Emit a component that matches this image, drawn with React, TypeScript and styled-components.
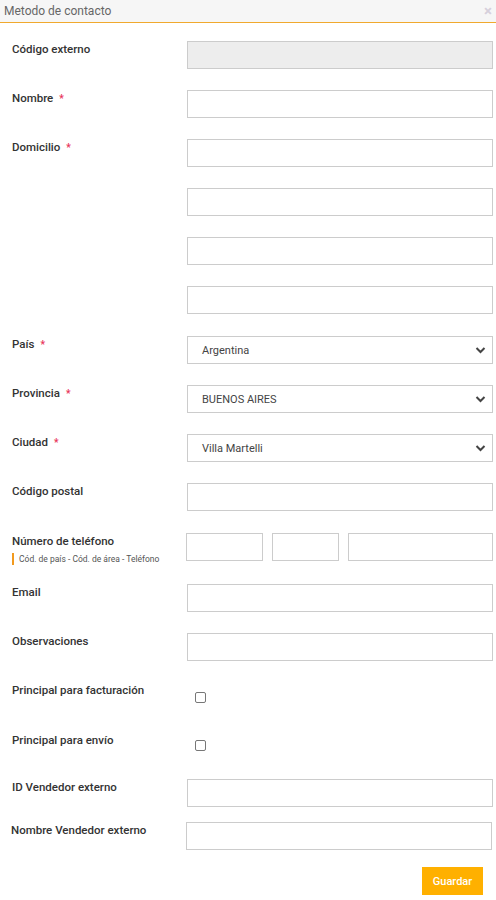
import React from "react";
import styled, { createGlobalStyle } from "styled-components";

const Global = createGlobalStyle`
  html, body { margin: 0; padding: 0; background: #fff; }
  body { font-family: Roboto, "Liberation Sans", Arial, sans-serif; }
  * { box-sizing: border-box; }
`;

const Modal = styled.div`
  width: 496px;
  min-height: 900px;
  background: #fff;
  display: flex;
  flex-direction: column;
`;

const Header = styled.div`
  flex: none;
  height: 23px;
  background: #f6f6f6;
  border-bottom: 1px solid #f0a92e;
  display: flex;
  align-items: center;
  justify-content: space-between;
  padding: 0 4px 0 4px;
`;

const Title = styled.div`
  font-size: 12px;
  color: #666;
  line-height: 16px;
`;

const Close = styled.span`
  font-size: 15px;
  color: #d6d0dc;
  font-weight: 700;
  line-height: 14px;
`;

const Body = styled.div`
  flex: none;
  padding: 18px 3px 0 12px;
  display: flex;
  flex-direction: column;
`;

const Row = styled.div<{ $mb?: number; $shift?: number }>`
  display: flex;
  align-items: flex-start;
  margin-bottom: ${(p) => p.$mb ?? 21}px;
  margin-left: ${(p) => p.$shift ?? 0}px;
`;

const LabelCol = styled.div`
  width: 175px;
  flex: none;
  padding-top: 1px;
  display: flex;
  flex-direction: column;
`;

const Label = styled.div`
  font-size: 11.5px;
  font-weight: 500;
  line-height: 14px;
  color: #333;
`;

const Req = styled.span`
  color: #e8345a;
  margin-left: 6px;
  font-weight: 700;
  font-size: 10px;
`;

const Hint = styled.div`
  margin-top: 5px;
  border-left: 2px solid #f29a1e;
  padding-left: 5px;
  font-size: 8.5px;
  line-height: 12px;
  color: #555;
`;

const FieldCol = styled.div`
  flex: 1;
  display: flex;
  flex-direction: column;
  gap: 21px;
`;

const Input = styled.input<{ $w?: number }>`
  width: ${(p) => (p.$w ? `${p.$w}px` : "306px")};
  height: 28px;
  border: 1px solid #ccc;
  background: #fff;
  padding: 0 10px;
  font-family: inherit;
  font-size: 11px;
  outline: none;
  &:disabled { background: #ededed; }
`;

const SelectBox = styled.div`
  width: 306px;
  height: 28px;
  border: 1px solid #ccc;
  background: #fff;
  display: flex;
  align-items: center;
  justify-content: space-between;
  padding: 0 6px 0 14px;
  font-size: 11px;
  color: #444;
`;

const PhoneGroup = styled.div`
  display: flex;
  gap: 9px;
  margin-left: -1px;
`;

const CheckCell = styled.div<{ $top?: number }>`
  height: 28px;
  padding: ${(p) => p.$top ?? 10}px 0 0 8px;
`;

const Check = styled.span`
  width: 11px;
  height: 11px;
  border: 1px solid #777;
  border-radius: 2px;
  display: block;
`;

const Footer = styled.div`
  display: flex;
  justify-content: flex-end;
`;

const Button = styled.button`
  width: 61px;
  height: 28px;
  background: #ffb000;
  color: #fff;
  border: none;
  font-family: inherit;
  font-size: 11px;
  font-weight: 500;
  margin-right: 10px;
`;

const Chevron = () => (
  <svg width="11" height="8" viewBox="0 0 11 8">
    <path d="M1.5 2 L5.5 6 L9.5 2" fill="none" stroke="#444" strokeWidth="2" />
  </svg>
);

const Select = ({ value }: { value: string }) => (
  <SelectBox>
    <span>{value}</span>
    <Chevron />
  </SelectBox>
);

export default function App() {
  return (
    <>
      <Global />
      <Modal>
        <Header>
          <Title>Metodo de contacto</Title>
          <Close>×</Close>
        </Header>
        <Body>
          <Row>
            <LabelCol><Label>Código externo</Label></LabelCol>
            <FieldCol><Input disabled /></FieldCol>
          </Row>
          <Row>
            <LabelCol><Label>Nombre<Req>*</Req></Label></LabelCol>
            <FieldCol><Input /></FieldCol>
          </Row>
          <Row $mb={22}>
            <LabelCol><Label>Domicilio<Req>*</Req></Label></LabelCol>
            <FieldCol>
              <Input />
              <Input />
              <Input />
              <Input />
            </FieldCol>
          </Row>
          <Row>
            <LabelCol><Label>País<Req>*</Req></Label></LabelCol>
            <FieldCol><Select value="Argentina" /></FieldCol>
          </Row>
          <Row>
            <LabelCol><Label>Provincia<Req>*</Req></Label></LabelCol>
            <FieldCol><Select value="BUENOS AIRES" /></FieldCol>
          </Row>
          <Row>
            <LabelCol><Label>Ciudad<Req>*</Req></Label></LabelCol>
            <FieldCol><Select value="Villa Martelli" /></FieldCol>
          </Row>
          <Row $mb={22}>
            <LabelCol><Label>Código postal</Label></LabelCol>
            <FieldCol><Input /></FieldCol>
          </Row>
          <Row $mb={19}>
            <LabelCol>
              <Label>Número de teléfono</Label>
              <Hint>Cód. de país - Cód. de área - Teléfono</Hint>
            </LabelCol>
            <FieldCol>
              <PhoneGroup>
                <Input $w={77} />
                <Input $w={67} />
                <Input $w={145} />
              </PhoneGroup>
            </FieldCol>
          </Row>
          <Row>
            <LabelCol><Label>Email</Label></LabelCol>
            <FieldCol><Input /></FieldCol>
          </Row>
          <Row>
            <LabelCol><Label>Observaciones</Label></LabelCol>
            <FieldCol><Input /></FieldCol>
          </Row>
          <Row $mb={22}>
            <LabelCol><Label>Principal para facturación</Label></LabelCol>
            <FieldCol><CheckCell><Check /></CheckCell></FieldCol>
          </Row>
          <Row $mb={19}>
            <LabelCol><Label>Principal para envío</Label></LabelCol>
            <FieldCol><CheckCell $top={8}><Check /></CheckCell></FieldCol>
          </Row>
          <Row $mb={15}>
            <LabelCol><Label>ID Vendedor externo</Label></LabelCol>
            <FieldCol><Input /></FieldCol>
          </Row>
          <Row $mb={17} $shift={-1}>
            <LabelCol><Label>Nombre Vendedor externo</Label></LabelCol>
            <FieldCol><Input /></FieldCol>
          </Row>
          <Footer>
            <Button>Guardar</Button>
          </Footer>
        </Body>
      </Modal>
    </>
  );
}
